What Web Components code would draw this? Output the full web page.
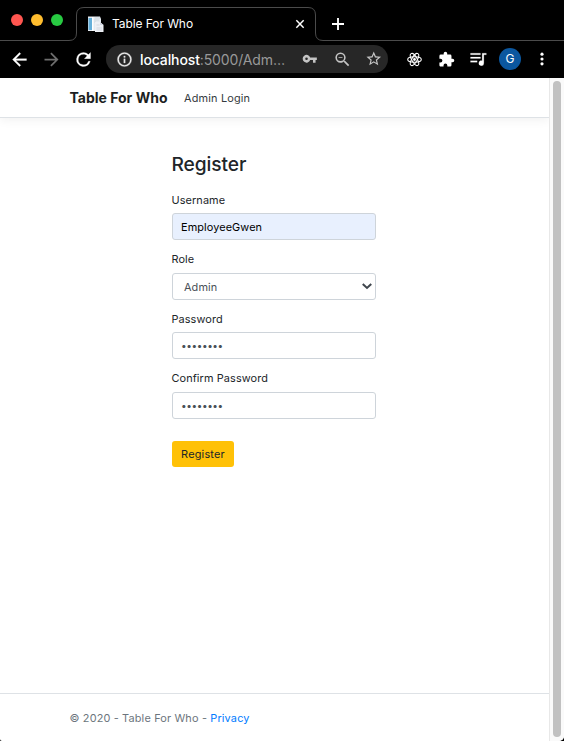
<!DOCTYPE html>
<html lang="en">
<head>
<meta charset="utf-8">
<title>Table For Who</title>
<style>
html,body{margin:0;height:100%;background:#000;overflow:hidden}
body{font-family:Inter,"Liberation Sans",sans-serif}
</style>
</head>
<body>
<browser-window></browser-window>
<script>
const define = (name, html) => {
  const template = document.createElement('template');
  template.innerHTML = html;
  customElements.define(name, class extends HTMLElement {
    constructor() {
      super();
      this.attachShadow({ mode: 'open' }).append(template.content.cloneNode(true));
    }
  });
};

const icons = {
  back: [21, '<path d="M20 11H7.83l5.59-5.59L12 4l-8 8 8 8 1.41-1.41L7.83 13H20z" stroke="currentColor" stroke-width=".3"/>'],
  forward: [21, '<path d="M12 4l-1.41 1.41L16.17 11H4v2h12.17l-5.58 5.59L12 20l8-8z"/>'],
  reload: [21, '<path d="M17.65 6.35A7.96 7.96 0 0 0 12 4a8 8 0 1 0 7.73 10h-2.08A6 6 0 1 1 12 6c1.66 0 3.14.69 4.22 1.78L13 11h7V4z" stroke="currentColor" stroke-width=".3"/>'],
  info: [17, '<path d="M11 17h2v-6h-2zm1-15a10 10 0 1 0 0 20 10 10 0 0 0 0-20zm0 18a8 8 0 1 1 0-16 8 8 0 0 1 0 16zM11 9h2V7h-2z" stroke="currentColor" stroke-width=".4"/>'],
  key: [15.5, '<path d="M12.65 10A6 6 0 1 0 12.65 14H17v4h4v-4h2v-4zM7 14a2 2 0 1 1 0-4 2 2 0 0 1 0 4z"/>'],
  zoom: [19, '<path d="M15.5 14h-.79l-.28-.27A6.47 6.47 0 0 0 16 9.5 6.5 6.5 0 1 0 9.5 16c1.61 0 3.09-.59 4.23-1.57l.27.28v.79l5 4.99L20.49 19zm-6 0a4.5 4.5 0 1 1 0-9 4.5 4.5 0 0 1 0 9zM7 9h5v1H7z"/>'],
  star: [17.5, '<path d="M22 9.24l-7.19-.62L12 2 9.19 8.63 2 9.24l5.46 4.73L5.82 21 12 17.27 18.18 21l-1.63-7.03zM12 15.4l-3.76 2.27 1-4.28-3.32-2.88 4.38-.38L12 6.1l1.71 4.04 4.38.38-3.32 2.88 1 4.28z"/>'],
  react: [17, '<g fill="none" stroke="currentColor" stroke-width="1.5"><ellipse cx="12" cy="12" rx="9.6" ry="3.8"/><ellipse cx="12" cy="12" rx="9.6" ry="3.8" transform="rotate(60 12 12)"/><ellipse cx="12" cy="12" rx="9.6" ry="3.8" transform="rotate(120 12 12)"/></g><circle cx="12" cy="12" r="2"/>'],
  puzzle: [17, '<path d="M20.5 11H19V7a2 2 0 0 0-2-2h-4V3.5a2.5 2.5 0 0 0-5 0V5H4a2 2 0 0 0-2 2v3.8h1.5a2.7 2.7 0 0 1 0 5.4H2V20c0 1.1.9 2 2 2h3.8v-1.5a2.7 2.7 0 0 1 5.4 0V22H17a2 2 0 0 0 2-2v-4h1.500a2.5 2.5 0 0 0 0-5z"/>'],
  music: [20, '<path d="M15 5H3v2h12zm0 4.500H3v2h12zM3 16h8v-2H3zM17 5v9.180a3 3 0 1 0 2 2.820V7h3V5z" stroke="currentColor" stroke-width=".2"/>'],
  more: [20, '<circle cx="12" cy="6.200" r="1.900"/><circle cx="12" cy="12" r="1.900"/><circle cx="12" cy="17.800" r="1.900"/>'],
  close: [16, '<path d="M6.500 6.500l11 11m0-11l-11 11" fill="none" stroke="currentColor" stroke-width="2.200"/>'],
  plus: [18, '<path d="M12 4v16M4 12h16" fill="none" stroke="currentColor" stroke-width="2.500"/>'],
  chevron: [12, '<path d="M3.500 8L12 16l8.500-8" fill="none" stroke="currentColor" stroke-width="4"/>']
};
customElements.define('ui-icon', class extends HTMLElement {
  constructor() {
    super();
    this.attachShadow({ mode: 'open' });
  }
  connectedCallback() {
    const [size, art] = icons[this.getAttribute('name')];
    this.shadowRoot.innerHTML = `<style>:host{display:flex;align-items:center;justify-content:center;flex:none}svg{display:block;fill:currentColor}</style><svg width="${size}" height="${size}" viewBox="0 0 24 24">${art}</svg>`;
  }
});

define('tab-strip', `
<style>
:host{display:flex;position:relative;height:41px;box-sizing:border-box;padding-left:11px;color:#fff}
.outline{position:absolute;left:0;top:0}
.lights{display:flex;gap:8px;padding-top:14px;width:76px}
.lights i{width:12px;height:12px;border-radius:50%}
.tab{display:flex;align-items:center;height:34px;margin-top:7px;width:229px;position:relative}
.title{font-size:12px;letter-spacing:-.08px;margin:-1px 0 0 8px;flex:1;white-space:nowrap}
.tab ui-icon{margin-right:8px}
.new{margin:7px 0 0 13px;height:34px}
</style>
<svg class="outline" width="564" height="41" fill="none" stroke="#4b4b4b"><path d="M0 40.500H69Q76.500 40.500 76.500 33V15Q76.500 7.500 84 7.500H308Q315.500 7.500 315.500 15V33Q315.500 40.500 323 40.500H564"/></svg>
<div class="lights"><i style="background:#ff5650"></i><i style="background:#ffbd2e"></i><i style="background:#28ca42"></i></div>
<div class="tab">
<svg width="17" height="17" viewBox="0 0 17 17"><path d="M1 0.500H13L14 3V15H1z" fill="#e4eaf0"/><path d="M1.500 2H5V14H1.500z" fill="#65afd9"/><path d="M5 1H6.500V15H5z" fill="#fff"/><path d="M8 2h5M7 4h5M7 6h2" stroke="#d0d9e0"/><path d="M8 6H13L16.500 9V16H8z" fill="#edf0f5"/><path d="M9.500 9h3M9.500 12h5.500M9.500 14h5.500" stroke="#c8ced8" stroke-width=".7"/><path d="M13 6V9H16.500" fill="#cfd4df"/></svg>
<span class="title">Table For Who</span><ui-icon name="close"></ui-icon></div>
<ui-icon class="new" name="plus"></ui-icon>`);

define('address-bar', `
<style>
:host{display:flex;align-items:center;box-sizing:border-box;width:282px;height:28px;border-radius:14px;background:#272727;color:#c4c4c4;padding-left:8px;gap:4px}
.info{width:20px;margin-right:2px;color:#e6e6e6}
.url{flex:1;font-size:14px;letter-spacing:-.12px;white-space:nowrap;color:#999}
.url b{font-weight:500;color:#fff;letter-spacing:-.12px}
.a{width:28px}
</style>
<ui-icon class="info" name="info"></ui-icon><span class="url"><b>localhost</b>:5000/Adm…</span>
<ui-icon class="a" name="key"></ui-icon><ui-icon class="a" name="zoom"></ui-icon><ui-icon class="a" name="star"></ui-icon>`);

define('tool-bar', `
<style>
:host{display:flex;align-items:center;height:37px;box-sizing:border-box;padding:0 0 1px 3.500px;color:#fff}
ui-icon,.who{width:32px;flex:none}
.off{color:#6e6e6e}
address-bar{margin:0 10px 0 6.500px}
.who{display:flex;justify-content:center}
.who span{width:22px;height:22px;border-radius:50%;background:#0b579f;font-size:12px;line-height:22px;text-align:center}
</style>
<ui-icon name="back"></ui-icon><ui-icon class="off" name="forward"></ui-icon><ui-icon name="reload"></ui-icon>
<address-bar></address-bar>
<ui-icon name="react"></ui-icon><ui-icon name="puzzle"></ui-icon><ui-icon name="music"></ui-icon>
<div class="who"><span>G</span></div><ui-icon name="more"></ui-icon>`);

define('site-header', `
<style>
:host{display:flex;align-items:center;height:40px;box-sizing:border-box;padding-left:69.500px;border-bottom:1px solid #dee2e6;box-shadow:0 3px 9px rgba(0,0,0,.05);white-space:nowrap}
b{font-size:14px;font-weight:700;width:114.500px;letter-spacing:0;color:#1c1f22}
span{font-size:10.900px;letter-spacing:.17px;color:#343a40;padding-top:1px}
</style><b>Table For Who</b><span>Admin Login</span>`);

define('form-field', `
<style>
:host{display:block;height:59.600px;font-size:10.900px;letter-spacing:.1px;color:#212529}
.label{height:20.400px;line-height:15px;white-space:nowrap;margin:-.4px 0 0 -.5px}
.box{display:flex;align-items:center;justify-content:space-between;box-sizing:border-box;height:27px;border:1px solid #ced4da;border-radius:3px;padding:1px 8px 0;color:#495057;background:#fff}
:host([kind=filled]) .box{background:#e8f0fe;color:#000}
:host([kind=select]) .box{padding:1px 2px 0 11px}
ui-icon{color:#3f464d;display:none;margin-bottom:2px}
:host([kind=select]) ui-icon{display:flex}
:host([kind=secret]) .box{font-size:10px;letter-spacing:-.4px;padding:0 8px 1px}
</style>
<div class="label"><slot name="label"></slot></div><div class="box"><slot></slot><ui-icon name="chevron"></ui-icon></div>`);

define('register-form', `
<style>
:host{display:flow-root;width:204px;margin-left:172px;padding-top:34px}
h1{margin:0 0 17px -.5px;height:24px;line-height:24px;font-size:19.200px;letter-spacing:-.1px;font-weight:500;color:#212529}
form-field{display:flow-root}
button{display:block;margin-top:9.500px;width:62px;height:26px;border:0;border-radius:3px;padding:0;background:#ffc107;color:#212529;font:10.900px Inter,sans-serif;letter-spacing:.2px}
</style>
<h1>Register</h1>
<form-field kind="filled"><span slot="label">Username</span>EmployeeGwen</form-field>
<form-field kind="select"><span slot="label">Role</span>Admin</form-field>
<form-field kind="secret"><span slot="label">Password</span>••••••••</form-field>
<form-field kind="secret"><span slot="label">Confirm Password</span>••••••••</form-field>
<button>Register</button>`);

define('site-footer', `
<style>
:host{display:flex;align-items:center;box-sizing:border-box;height:48px;border-top:1px solid #dee2e6;padding:1px 0 0 69.500px;font-size:10.900px;letter-spacing:.16px;color:#6c757d;white-space:pre}
a{color:#007bff}
</style><span>© 2020 - Table For Who - <a>Privacy</a></span>`);

define('scroll-bar', `
<style>
:host{display:block;box-sizing:border-box;width:15px;border-left:1px solid #e8e8e8;background:#fafafa;padding:3px 3px 4px}
div{height:100%;border-radius:4px;background:#c1c1c1}
</style><div></div>`);

define('browser-window', `
<style>
:host{display:flex;flex-direction:column;width:564px;height:741px;background:#000}
.view{flex:1;display:flex;min-height:0;background:#fff;border-radius:0 0 5px 2px;overflow:hidden}
main{width:549px;display:flex;flex-direction:column;overflow:hidden}
register-form{flex:1}
</style>
<tab-strip></tab-strip><tool-bar></tool-bar>
<div class="view"><main><site-header></site-header><register-form></register-form><site-footer></site-footer></main><scroll-bar></scroll-bar></div>`);
</script>
</body>
</html>
